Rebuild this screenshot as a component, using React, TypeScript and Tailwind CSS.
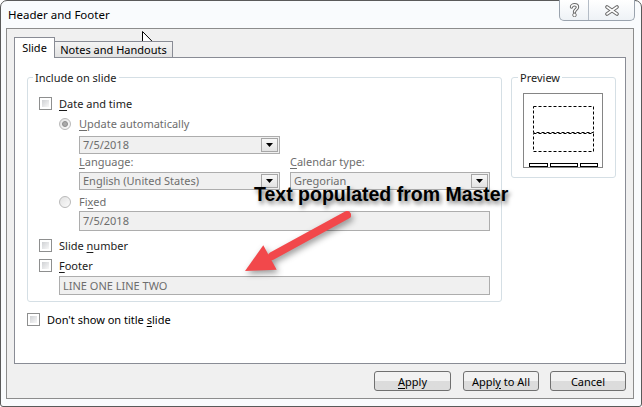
import React from 'react';

// Header and Footer dialog, Windows 7 basic theme

const Key: React.FC<{ children: React.ReactNode }> = ({ children }) => (
  <span className="underline underline-offset-2">{children}</span>
);

const CheckBox: React.FC = () => (
  <span className="flex h-[13px] w-[13px] shrink-0 border border-[#8e8f8f] bg-white p-[2px]">
    <span className="h-full w-full bg-linear-to-br from-[#cfd1d4] to-[#f8f8f8]" />
  </span>
);

const Radio: React.FC<{ checked?: boolean }> = ({ checked }) => (
  <span className="flex h-[12px] w-[12px] shrink-0 items-center justify-center rounded-full border border-[#b9b9b9] bg-linear-to-br from-[#e2e2e2] to-[#fbfbfb]">
    {checked && <span className="h-[6px] w-[6px] rounded-full border border-[#8d8d8d] bg-[#a9a9a9]" />}
  </span>
);

const DropArrow: React.FC = () => (
  <span className="my-px mr-px flex w-[17px] shrink-0 items-end justify-center border border-[#a6a6a6] bg-linear-to-b from-[#f7f7f7] to-[#e3e3e3] pb-[4px]">
    <svg width="7" height="4" viewBox="0 0 7 4">
      <path d="M0 0 H7 L3.5 4 Z" fill="#000" />
    </svg>
  </span>
);

const Combo: React.FC<{ value: string; width: string }> = ({ value, width }) => (
  <div className={`flex h-[18px] ${width} border border-[#adadad] bg-[#f0f0f0]`}>
    <span className="flex-1 pl-[3px] leading-[16px] text-[#6d6d6d]">{value}</span>
    <DropArrow />
  </div>
);

const TextBox: React.FC<{ value: string; className: string }> = ({ value, className }) => (
  <div className={`${className} border border-[#adadad] bg-[#f0f0f0] pl-[3px] text-[#6d6d6d]`}>
    {value}
  </div>
);

const PushButton: React.FC<{ children: React.ReactNode; className?: string }> = ({ children, className }) => (
  <div
    className={`flex h-[20px] w-[76px] items-center justify-center rounded-[3px] border border-[#707070] bg-linear-to-b from-[#f2f2f2] from-50% to-[#dcdcdc] to-50% text-black ${className ?? ''}`}
  >
    {children}
  </div>
);

const PreviewSketch: React.FC = () => (
  <svg width="80" height="75" viewBox="0 0 80 75">
    <rect x="0.5" y="0.5" width="79" height="74" fill="#fff" stroke="#858585" />
    <rect x="10.5" y="13.5" width="60" height="26" fill="none" stroke="#000" strokeDasharray="3 2" />
    <rect x="10.5" y="40.5" width="60" height="18" fill="none" stroke="#000" strokeDasharray="3 2" />
    <rect x="6.5" y="70.5" width="18" height="3" fill="#fff" stroke="#000" />
    <rect x="27.5" y="70.5" width="27" height="3" fill="#fff" stroke="#000" />
    <rect x="57.5" y="70.5" width="17" height="3" fill="#fff" stroke="#000" />
  </svg>
);

const CaptionButtons: React.FC = () => (
  <div className="-mt-px flex h-[21px] w-[76px] self-start rounded-b-[5px] border border-t-0 border-[#9aa3ae] bg-linear-to-b from-[#ffffff] to-[#eef2f6]">
    <div className="flex w-[29px] items-center justify-center border-r border-[#b4bcc6]">
      <svg width="11" height="14" viewBox="0 0 11 14">
        <g fill="none" strokeLinecap="round">
          <path d="M2.5 4 C2.5 1 8.5 1 8.5 4 C8.5 6.5 5.5 6.5 5.5 9" stroke="#6b6b6b" strokeWidth="3.4" />
          <path d="M2.5 4 C2.5 1 8.5 1 8.5 4 C8.5 6.5 5.5 6.5 5.5 9" stroke="#fff" strokeWidth="1.4" />
        </g>
        <circle cx="5.5" cy="12" r="1.8" fill="#fff" stroke="#6b6b6b" strokeWidth="0.9" />
      </svg>
    </div>
    <div className="flex flex-1 items-center justify-center">
      <svg width="14" height="11" viewBox="0 0 14 11">
        <g fill="none" strokeLinecap="round">
          <path d="M2 2 L12 9 M12 2 L2 9" stroke="#6b6b6b" strokeWidth="3.6" />
          <path d="M2 2 L12 9 M12 2 L2 9" stroke="#fff" strokeWidth="1.6" />
        </g>
      </svg>
    </div>
  </div>
);

export default function App() {
  return (
    <div className="relative h-[407px] w-[642px] bg-white font-['Noto_Sans',sans-serif] text-[11px] leading-[15px] text-[#1b1b1b]">
      <div className="flex h-full w-full flex-col rounded-t-[7px] rounded-b-[3px] border border-[#5a5a5a] bg-[#f9fbfd]">
        {/* title bar */}
        <div className="flex h-[27px] shrink-0 justify-between pl-[7px] pr-[6px]">
          <span className="self-center text-[11.5px] text-black">Header and Footer</span>
          <CaptionButtons />
        </div>

        {/* client area */}
        <div className="mb-[7px] ml-[5px] mr-[7px] flex flex-1 flex-col border border-[#8c8c8c] bg-[#f0f0f0] px-[7px] pb-[7px] pt-[8px]">
          <div className="relative z-10 -mb-px flex h-[21px] items-end">
            <div className="flex h-[21px] w-[41px] items-center justify-center border border-b-0 border-[#898c95] bg-white pb-px text-black">
              Slide
            </div>
            <div className="-ml-px flex h-[17px] w-[119px] items-center justify-center border border-[#898c95] bg-linear-to-b from-[#f4f4f4] to-[#e2e2e2] text-black">
              Notes and Handouts
            </div>
          </div>

          <div className="flex flex-1 flex-col border border-[#898c95] bg-white pl-[12px]">
            <div className="mt-[12px] flex gap-[9px]">
              {/* main options group */}
              <fieldset className="w-[475px] rounded-[3px] border border-[#d5dfe5] pb-[6px]">
                <legend className="ml-[5px] px-[2px] leading-[15px]">Include on slide</legend>
                <div className="pl-[11px]">
                  <div className="mt-[12px] flex h-[13px] items-center gap-[7px]">
                    <CheckBox />
                    <span>
                      <Key>D</Key>ate and time
                    </span>
                  </div>
                  <div className="ml-[20px] mt-[7px] flex h-[13px] items-center gap-[8px] text-[#6d6d6d]">
                    <Radio checked />
                    <span>
                      <Key>U</Key>pdate automatically
                    </span>
                  </div>
                  <div className="ml-[40px] mt-[6px]">
                    <Combo value="7/5/2018" width="w-[201px]" />
                  </div>
                  <div className="ml-[40px] flex gap-[10px] text-[#6d6d6d]">
                    <div className="flex w-[201px] flex-col">
                      <span className="h-[15px]">
                        <Key>L</Key>anguage:
                      </span>
                      <div className="mt-[3px]">
                        <Combo value="English (United States)" width="w-[201px]" />
                      </div>
                    </div>
                    <div className="flex w-[200px] flex-col">
                      <span className="h-[15px]">
                        <Key>C</Key>alendar type:
                      </span>
                      <div className="mt-[3px]">
                        <Combo value="Gregorian" width="w-[200px]" />
                      </div>
                    </div>
                  </div>
                  <div className="ml-[20px] mt-[5px] flex h-[13px] items-center gap-[8px] text-[#6d6d6d]">
                    <Radio />
                    <span>
                      Fi<Key>x</Key>ed
                    </span>
                  </div>
                  <div className="ml-[40px] mt-[3px]">
                    <TextBox value="7/5/2018" className="h-[20px] w-[411px] leading-[18px]" />
                  </div>
                  <div className="mt-[8px] flex h-[13px] items-center gap-[7px]">
                    <CheckBox />
                    <span>
                      Slide <Key>n</Key>umber
                    </span>
                  </div>
                  <div className="mt-[7px] flex h-[13px] items-center gap-[7px]">
                    <CheckBox />
                    <span>
                      <Key>F</Key>ooter
                    </span>
                  </div>
                  <div className="ml-[20px] mt-[4px]">
                    <TextBox value="LINE ONE LINE TWO" className="h-[19px] w-[431px] leading-[17px]" />
                  </div>
                </div>
              </fieldset>

              {/* preview group */}
              <fieldset className="h-[108px] w-[105px] rounded-[3px] border border-[#d5dfe5]">
                <legend className="ml-[6px] px-[2px] leading-[15px]">Preview</legend>
                <div className="mt-[8px] pl-[11px]">
                  <PreviewSketch />
                </div>
              </fieldset>
            </div>

            <div className="mt-[11px] flex h-[13px] items-center gap-[7px] text-black">
              <CheckBox />
              <span>
                Don't show on title <Key>s</Key>lide
              </span>
            </div>
          </div>

          <div className="mt-[7px] flex justify-end">
            <PushButton className="w-[77px]">
              <span>
                <Key>A</Key>pply
              </span>
            </PushButton>
            <PushButton className="ml-[12px]">
              <span>
                Appl<Key>y</Key> to All
              </span>
            </PushButton>
            <PushButton className="ml-[11px]">Cancel</PushButton>
          </div>
        </div>
      </div>

      {/* callout */}
      <div className="absolute left-[254px] top-[183px] whitespace-nowrap font-['Liberation_Sans',Arial,sans-serif] text-[19.5px] font-bold leading-[22px] text-black [text-shadow:2px_3px_4px_rgba(0,0,0,0.55)]">
        Text populated from Master
      </div>
      <svg
        className="absolute left-[235px] top-[205px] [filter:drop-shadow(2px_3px_3px_rgba(0,0,0,0.4))]"
        width="125"
        height="75"
        viewBox="0 0 125 75"
      >
        <path d="M112 10 L37 51" stroke="#f2484b" strokeWidth="8" strokeLinecap="round" />
        <path d="M10 66 L28.3 40.2 L41.7 64.8 Z" fill="#f2484b" />
      </svg>

      {/* mouse pointer */}
      <svg className="absolute left-[142px] top-[31px]" width="13" height="20" viewBox="0 0 13 20">
        <path
          d="M0.5 0.5 L0.5 16 L4.2 12.5 L6.8 18.5 L9 17.5 L6.5 11.7 L11.5 11.7 Z"
          fill="#fff"
          stroke="#000"
          strokeWidth="1"
          strokeLinejoin="round"
        />
      </svg>
    </div>
  );
}
